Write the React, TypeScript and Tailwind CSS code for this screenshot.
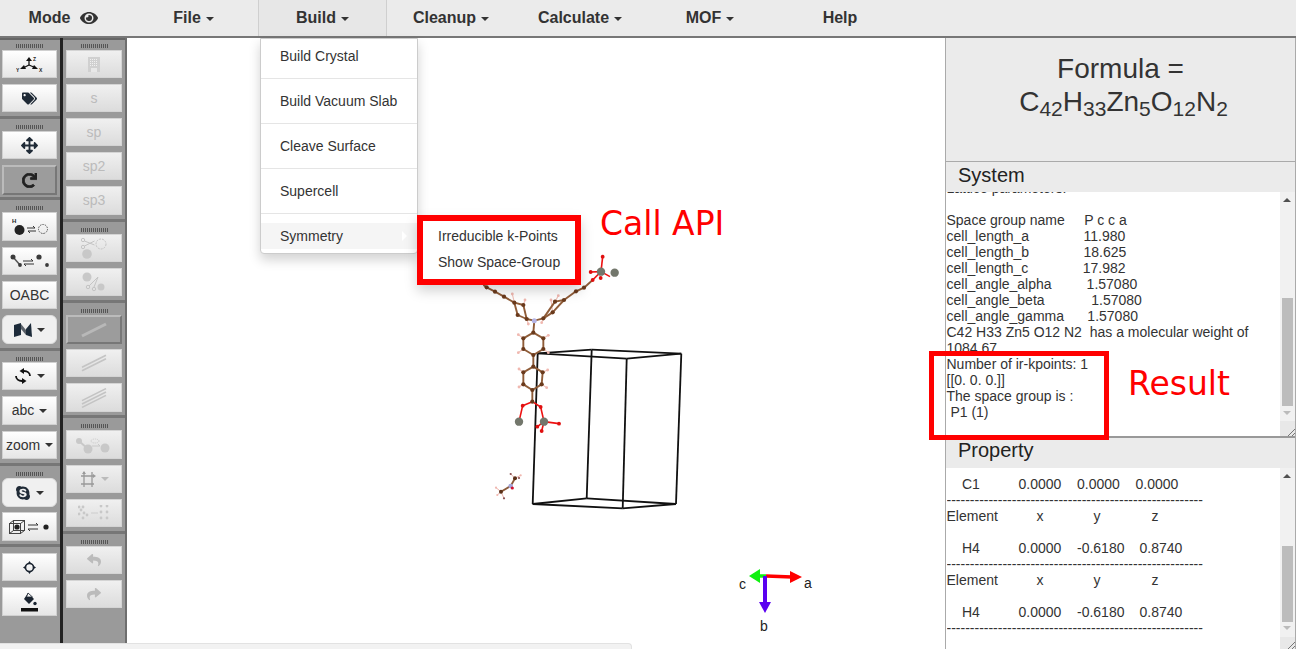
import React from "react";
import { FaEye, FaTags, FaArrowsAlt, FaRedo, FaSkype, FaReply, FaShare } from "react-icons/fa";

const Caret = () => <span className="inline-block ml-[5px] align-middle w-0 h-0 border-x-[4px] border-x-transparent border-t-[4px] border-t-current" />;

const base = "w-full flex items-center justify-center text-[14px] shrink-0";
function Btn({ h = 28, children, on, dis, mt = 6, rounded }: { h?: number; children?: React.ReactNode; on?: boolean; dis?: boolean; mt?: number; rounded?: boolean }) {
  const look = on
    ? "bg-[#9c9c9c] border-2 border-t-[#bbbbbb] border-l-[#bbbbbb] border-r-[#777777] border-b-[#777777] text-[#222]"
    : dis
    ? "bg-gradient-to-b from-[#f0f0f0] to-[#dcdcdc] text-[#bbb] border border-[#d4d4d4]"
    : rounded
    ? "bg-[#f0f0f0] text-[#333] rounded-[6px] border border-[#dddddd]"
    : "bg-gradient-to-b from-[#ffffff] to-[#e6e6e6] text-[#333] border border-[#d0d0d0]";
  return <div style={{ height: h, marginTop: mt }} className={`${base} ${look}`}>{children}</div>;
}
const Handle = ({ first }: { first?: boolean }) => (
  <div className={`h-[4px] w-[27px] mx-auto shrink-0 opacity-80 bg-[repeating-linear-gradient(90deg,#444_0_1px,transparent_1px_2px)] ${first ? "mt-[4px]" : "mt-[6px]"}`} />
);
function Group({ children, last, pb = 4, wide }: { children: React.ReactNode; last?: boolean; pb?: number; wide?: boolean }) {
  const pad = pb === 2 ? "pb-[2px]" : pb === 3 ? "pb-[3px]" : "pb-[4px]";
  return <div className={`flex flex-col pr-[3px] ${wide ? "pl-[3px]" : "pl-[2px]"} ${pad} ${last ? "" : "border-b-[3px] border-[#777]"}`}>{children}</div>;
}

const Atom = ({ x, y, r = 2, c = "#5a3018" }: { x: number; y: number; r?: number; c?: string }) => <circle cx={x} cy={y} r={r} fill={c} />;

const P = (zx: number, zy: number): [number, number] => [470 + zx / 3, 250 + zy / 3];

type L = [number, number, number, number];
const ccBonds: L[] = [
  [190, 248, 220, 265],[220, 265, 220, 297],[220, 297, 190, 315],[190, 315, 160, 297],[160, 297, 160, 265],[160, 265, 190, 248],
  [193, 212, 190, 248],[190, 315, 190, 350],
  [190, 350, 218, 367],[218, 367, 215, 403],[215, 403, 187, 420],[187, 420, 160, 403],[160, 403, 160, 367],[160, 367, 190, 350],[187, 420, 187, 455],
  [193, 212, 170, 207],[170, 207, 160, 165],[160, 165, 133, 158],[133, 158, 143, 195],[143, 195, 170, 207],[133, 158, 102, 140],[102, 140, 75, 125],[75, 125, 50, 112],[50, 112, 40, 105],
  [193, 212, 220, 205],[220, 205, 255, 155],[255, 155, 282, 150],[282, 150, 248, 187],[248, 187, 220, 205],[282, 150, 318, 124],[318, 124, 342, 113],[342, 113, 368, 90],
];
const oBonds: L[] = [
  [187, 455, 158, 467],[187, 455, 212, 471],[158, 467, 147, 515],[212, 471, 222, 515],[222, 515, 202, 530],[222, 515, 215, 543],[222, 515, 267, 521],
  [393, 65, 398, 20],[393, 65, 362, 66],[393, 65, 368, 90],[393, 65, 420, 80],
];
const hBonds: L[] = [
  [220,265,235,256],[160,265,145,254],[160,297,145,308],[220,297,235,308],[160,367,147,357],[218,367,233,360],[160,403,147,411],[215,403,230,413],[133,158,127,132],[160,165,165,150],[170,207,175,222],[220,205,215,218],[255,155,265,137],[248,187,243,150],
];
const cAtoms = [[190,248],[220,265],[220,297],[190,315],[160,297],[160,265],[190,350],[218,367],[215,403],[187,420],[160,403],[160,367],[187,455],[170,207],[160,165],[133,158],[143,195],[102,140],[75,125],[50,112],[220,205],[255,155],[282,150],[248,187],[318,124],[342,113]];
const oAtoms = [[158,467],[212,471],[202,530],[215,543],[267,521],[398,20],[362,66],[368,90],[392,84]];

function Scene() {
  const tl = [537.7, 353.3], tb = [591.7, 349.7], tr = [681.3, 353.7], tf = [626.7, 358.7];
  const bl = [532.7, 504], bb = [586.7, 498.3], br = [676, 504], bf = [622.7, 508.3];
  const seg = (b: L, i: number) => { const a = P(b[0], b[1]); const c = P(b[2], b[3]); return <line key={i} x1={a[0]} y1={a[1]} x2={c[0]} y2={c[1]} />; };
  return (
    <svg className="absolute left-0 top-0 w-[818px] h-[611px] pointer-events-none" viewBox="127 38 818 611">
      <g stroke="#111" strokeWidth="1.8" fill="none">
        {[[tl,tb],[tb,tr],[tr,tf],[tf,tl],[bl,bb],[bb,br],[br,bf],[bf,bl],[tl,bl],[tb,bb],[tr,br],[tf,bf]].map((e,i)=><line key={i} x1={e[0][0]} y1={e[0][1]} x2={e[1][0]} y2={e[1][1]} />)}
      </g>
      <g stroke="#f0bdb4" strokeWidth="1.1">{hBonds.map(seg)}</g>
      <g stroke="#8f5c38" strokeWidth="1.9">{ccBonds.map(seg)}</g>
      <g stroke="#ee1111" strokeWidth="1.6">{oBonds.map(seg)}</g>
      {hBonds.map((b, i) => { const a = P(b[2], b[3]); return <circle key={i} cx={a[0]} cy={a[1]} r="1.4" fill="#f0b8b0" />; })}
      {cAtoms.map(([x, y], i) => { const a = P(x, y); return <Atom key={i} x={a[0]} y={a[1]} r={2.1} c="#6a3a1c" />; })}
      {oAtoms.map(([x, y], i) => { const a = P(x, y); return <Atom key={i} x={a[0]} y={a[1]} r={1.9} c="#e01010" />; })}
      {[[147,515],[222,515],[393,65],[434,68]].map(([x, y], i) => { const a = P(x, y); return <Atom key={i} x={a[0]} y={a[1]} r={4.2} c="#73776c" />; })}
      <Atom x={534.3} y={320.7} r={2.5} c="#b4b4e4" />
      <g stroke="#8b5a3a" strokeWidth="1.8">
        <line x1="510.7" y1="486" x2="501" y2="491.7" /><line x1="510.7" y1="486" x2="515" y2="478.3" />
      </g>
      <g stroke="#e8a8a0" strokeWidth="0.9">
        <line x1="515" y1="478.3" x2="510.7" y2="474" /><line x1="515" y1="478.3" x2="520.7" y2="475.3" /><line x1="501" y1="491.7" x2="496" y2="487.7" /><line x1="501" y1="491.7" x2="497.3" y2="495" /><line x1="501" y1="491.7" x2="504" y2="498.3" />
      </g>
      <Atom x={501} y={491.7} /><Atom x={515} y={478.3} /><Atom x={510.7} y={486} r={2.3} c="#a4a4d8" /><Atom x={512.3} y={488} r={1.6} c="#d01030" />
      {[[510.7,474,"#8a5050"],[520.7,475.3,"#f0b8b0"],[519,478,"#8a5050"],[496,487.7,"#f0b8b0"],[497.3,495,"#f0b8b0"],[504,498.3,"#8a5050"]].map(([x,y,c],i)=><circle key={i} cx={x as number} cy={y as number} r="1.1" fill={c as string} />)}
      <g fill="none">
        <line x1="766" y1="576" x2="792" y2="577" stroke="#f00" strokeWidth="3.5" /><polygon points="790,571 802,577 790,583" fill="#f00" />
        <line x1="766" y1="576" x2="758" y2="576" stroke="#10f010" strokeWidth="3.5" /><polygon points="749,576 760,569 760,583" fill="#10f010" />
        <line x1="765" y1="576" x2="765" y2="603" stroke="#5a00f0" strokeWidth="4" /><polygon points="759,602 771,602 765,613" fill="#5a00f0" />
      </g>
    </svg>
  );
}

const Axes3 = () => (
  <svg width="27" height="17" viewBox="0 0 27 17">
    <g stroke="#111" strokeWidth="1.3" fill="#111"><line x1="13" y1="9" x2="13" y2="4"/><line x1="13" y1="9" x2="7" y2="12"/><line x1="13" y1="9" x2="20" y2="12"/><polygon points="13,1 10,5 16,5" stroke="none"/><polygon points="4,13 8,9 10,13" stroke="none"/><polygon points="22,13 18,9 16,13" stroke="none"/></g>
    <g fontSize="5" fontWeight="700" fontFamily="Liberation Sans" fill="#222"><text x="17" y="5">Z</text><text x="0" y="16">Y</text><text x="23" y="16">X</text></g>
  </svg>
);
const HSwap = () => (
  <svg width="36" height="20" viewBox="0 0 36 20"><text x="0" y="6" fontSize="6" fontWeight="700" fontFamily="Liberation Sans" fill="#222">H</text><circle cx="7.5" cy="13" r="5" fill="#222"/><path d="M15 11h8M23 11l-2-2M24 14h-8M16 14l2 2" stroke="#333" fill="none"/><circle cx="31" cy="12" r="4.5" fill="none" stroke="#555" strokeDasharray="1.5 1"/></svg>
);
const BondSwap = () => (
  <svg width="40" height="14" viewBox="0 0 40 14"><path d="M3 3l7 8" stroke="#555" strokeWidth="1.5"/><g fill="#3a3a3a"><circle cx="3" cy="3" r="2.5"/><circle cx="10" cy="11" r="1.9"/><circle cx="29" cy="3" r="2.6"/><circle cx="37" cy="11" r="1.9"/></g><path d="M13 7h10l-2-2M24 10H14l2 2" stroke="#333" fill="none"/></svg>
);
const MapIcon = () => (
  <svg width="18" height="14" viewBox="0 0 18 14"><path d="M0 2L7 0v12l-7 2z" fill="#1d2b3a"/><path d="M7 1l5 6v5L7 6z" fill="#5a6068"/><path d="M12 6l5-6 1 14-6-2z" fill="#1d2b3a"/></svg>
);
const CycleIcon = () => (
  <svg width="18" height="16" viewBox="0 0 18 16" fill="none" stroke="#111" strokeWidth="1.8"><path d="M16 8c0-3-2.500-5-6-5"/><path d="M2 8c0 3 2.500 5 6 5"/><polygon points="5.500,3 10,0 10,6" fill="#111" stroke="none"/><polygon points="12.500,13 8,10 8,16" fill="#111" stroke="none"/></svg>
);
const CubeSwap = () => (
  <svg width="41" height="14" viewBox="0 0 41 14"><g fill="none" stroke="#444"><rect x="0.500" y="3.500" width="11" height="10"/><rect x="4.500" y="0.500" width="11" height="10"/><path d="M0.500 3.500l4-3M11.500 3.500l4-3M11.500 13.500l4-3M0.500 13.500l4-3"/></g><circle cx="8" cy="7" r="2.6" fill="#222"/><path d="M19 5h10M29 5l-2-2M29 9H19M19 9l2 2" stroke="#333" fill="none"/><circle cx="37" cy="7" r="2.6" fill="#222"/></svg>
);
const Crosshair = () => (
  <svg width="13" height="13" viewBox="0 0 13 13" fill="#1a2430"><circle cx="6.500" cy="6.500" r="4" fill="none" stroke="#1a2430" strokeWidth="1.6"/><polygon points="6.500,0 4.500,3 8.500,3"/><polygon points="6.500,13 4.500,10 8.500,10"/><polygon points="0,6.500 3,4.500 3,8.500"/><polygon points="13,6.500 10,4.500 10,8.500"/></svg>
);
const Bucket = () => (
  <svg width="17" height="20" viewBox="0 0 17 20"><path d="M7 1l6 6-5 5-5-5z" fill="#1a2430"/><path d="M5.500 5h6L7 1z" fill="#f4f4f4" stroke="#1a2430" strokeWidth="0.800"/><circle cx="14" cy="11.500" r="1.700" fill="#1a2430"/><rect x="0" y="16" width="17" height="3.500" fill="#111"/></svg>
);
const Doc = () => (
  <svg width="12" height="15" viewBox="0 0 12 15"><rect width="12" height="15" fill="#d0d0d0"/><g fill="#f0f0f0">{[2,4,6,8].map(x=>[2,4,6,8].map(y=><rect key={x+"-"+y} x={x} y={y} width="1" height="1"/>))}</g><rect x="3" y="11" width="6" height="4" fill="#e8e8e8"/></svg>
);
const Scissor = () => (
  <g stroke="#c4c4c4" fill="none"><circle cx="2" cy="2" r="1.700"/><circle cx="2" cy="9" r="1.700"/><path d="M3.500 3l10 4M3.500 8l10-5"/></g>
);
const Cut1 = () => (
  <svg width="26" height="21" viewBox="0 0 26 21"><circle cx="6" cy="16" r="4.800" fill="#c8c8c8"/><circle cx="20" cy="6" r="5" fill="none" stroke="#c4c4c4" strokeDasharray="2 1"/><Scissor /></svg>
);
const Cut2 = () => (
  <svg width="26" height="20" viewBox="0 0 26 20"><circle cx="6" cy="5" r="4.500" fill="#c8c8c8"/><circle cx="20" cy="15" r="3.500" fill="#c8c8c8"/><g stroke="#c4c4c4" fill="none"><circle cx="7" cy="15" r="1.700"/><circle cx="13" cy="17" r="1.700"/><path d="M8 14l9-9M13 15l4-10"/></g></svg>
);
const Lines = ({ n, light }: { n: number; light?: boolean }) => (
  <svg width="26" height="20" viewBox="0 0 26 20" stroke={light ? "#b8b8b8" : "#c4c4c4"} strokeWidth={light ? 3 : 1.6}>{Array.from({ length: n }).map((_, i) => <line key={i} x1="1" y1={16 + i * 3.4 - (n - 1) * 1.7} x2="25" y2={4 + i * 3.4 - (n - 1) * 1.7} />)}</svg>
);
const Merge = () => (
  <svg width="38" height="20" viewBox="0 0 38 20"><circle cx="4" cy="6" r="3" fill="#c8c8c8"/><circle cx="13" cy="14" r="4.500" fill="#c8c8c8"/><path d="M4 6l9 8" stroke="#c8c8c8" strokeWidth="2"/><circle cx="30" cy="13" r="4.500" fill="#c8c8c8"/><ellipse cx="20" cy="6" rx="4" ry="2" fill="none" stroke="#c8c8c8" strokeDasharray="1 1"/><path d="M17 11h8M25 11l-2-2" stroke="#c8c8c8" fill="none"/></svg>
);
const Crop = () => (
  <svg width="16" height="17" viewBox="0 0 16 17" stroke="#999" fill="#999" strokeWidth="1.300"><path d="M1 5h13M1 13h13M4 1v15M12 1v15" fill="none"/><polygon points="16,5 13,3 13,7" stroke="none"/><polygon points="4,0 2,3 6,3" stroke="none"/></svg>
);
const Dots = () => (
  <svg width="32" height="16" viewBox="0 0 32 16" fill="#c8c8c8">{[[1,2],[5,2],[3,5],[1,9],[6,8],[9,10],[5,13],[23,1],[29,1],[23,7],[29,7],[23,13],[29,13]].map(([x,y],i)=><circle key={i} cx={x} cy={y} r="1.400"/>)}<path d="M13 8h7" stroke="#ccc"/></svg>
);

const menuItems = ["Build Vacuum Slab", "Cleave Surface", "Supercell"];
const sysText = `Lattice parameters:

Space group name     P c c a
cell_length_a              11.980
cell_length_b              18.625
cell_length_c              17.982
cell_angle_alpha         1.57080
cell_angle_beta            1.57080
cell_angle_gamma      1.57080`;
const sysText2 = `Number of ir-kpoints: 1
[[0. 0. 0.]]
The space group is :
 P1 (1)`;
const dash = "-".repeat(55);
const Head = () => (
  <div className="flex h-[16px]">
    <span className="w-[72px]">Element</span>
    <span className="w-[58.5px] pl-[18px]">x</span>
    <span className="w-[58.500px] pl-[16.5px]">y</span>
    <span className="w-[58px] pl-[16px]">z</span>
  </div>
);
const Vals = ({ a, c, d, shift }: { a: string; c: string; d: string; shift?: boolean }) => (
  <div className="flex h-[16px]">
    <span className="w-[72px] pl-[15.5px]">{a}</span>
    <span className="w-[58.5px]">0.0000</span>
    <span className="w-[58.500px]">{c}</span>
    <span className={`w-[58px] ${shift ? "pl-[4px]" : ""}`}>{d}</span>
  </div>
);
const Dash = () => <div className="h-[16px] leading-[16px] overflow-hidden">{dash}</div>;

function Scroll({ tall }: { tall?: boolean }) {
  return (
    <div className="w-[15px] shrink-0 bg-[#f1f1f1] relative">
      <div className="absolute left-[3px] top-[6px] w-0 h-0 border-x-[4px] border-x-transparent border-b-[4px] border-b-[#505050]" />
      <div className={`absolute left-[2px] w-[11px] bg-[#bcbcbc] ${tall ? "top-[106px] h-[108px]" : "top-[78px] h-[76px]"}`} />
      <div className={`absolute left-[3px] w-0 h-0 border-x-[4px] border-x-transparent border-t-[4px] border-t-[#bbbbbb] ${tall ? "bottom-[21px]" : "bottom-[19px]"}`} />
      <div className={`absolute left-0 bottom-0 w-[15px] bg-[#e8e8e8] overflow-hidden ${tall ? "h-[15px]" : "h-[12px]"}`}>
        <svg className="absolute right-0 bottom-0" width="10" height="10" viewBox="0 0 10 10" stroke="#777"><path d="M3 10l7-7M7 10l3-3" /></svg>
      </div>
    </div>
  );
}

const Sub = ({ children }: { children: React.ReactNode }) => <sub className="text-[21px] leading-none">{children}</sub>;

export default function App() {
  return (
    <div className="w-[1296px] h-[649px] relative overflow-hidden bg-white text-[#333] font-['Liberation_Sans',Arial,sans-serif] flex flex-col">
      <nav className="h-[38px] shrink-0 bg-[#ebebeb] border-b-2 border-[#777] flex text-[16px] font-bold leading-[36px] text-center">
        <div className="w-[129px] pr-[2px] flex justify-center items-center gap-[10px]"><span>Mode</span><FaEye size={18} /></div>
        <div className="w-[129px]">File<Caret /></div>
        <div className="w-[129px] bg-[#e7e7e7] border-l border-r border-[#cfcfcf]">Build<Caret /></div>
        <div className="w-[130px] pr-[2px]">Cleanup<Caret /></div>
        <div className="w-[129px] pr-[3px]">Calculate<Caret /></div>
        <div className="w-[130px] pr-[2px]">MOF<Caret /></div>
        <div className="w-[130px] pr-[2px]">Help</div>
      </nav>
      <div className="flex-1 flex min-h-0">
        <div className="w-[127px] shrink-0 bg-[#9a9a9a] flex border-r-2 border-[#6e6e6e] text-[#333]">
          <div className="w-[60px] flex flex-col border-t-2 border-[#666]">
            <Group><Handle first /><Btn mt={2}><Axes3 /></Btn><Btn><FaTags size={15} color="#1f2a36" /></Btn></Group>
            <Group pb={2}><Handle /><Btn mt={2}><FaArrowsAlt size={17} color="#1f2a36" /></Btn><Btn on h={30}><FaRedo size={15} stroke="currentColor" strokeWidth={28} /></Btn></Group>
            <Group><Handle /><Btn mt={2} h={29}><HSwap /></Btn><Btn><BondSwap /></Btn><Btn>OABC</Btn><Btn h={29} rounded><MapIcon /><Caret /></Btn></Group>
            <Group><Handle /><Btn mt={1}><CycleIcon /><Caret /></Btn><Btn h={29}>abc<Caret /></Btn><Btn>zoom<Caret /></Btn></Group>
            <Group pb={3}><Handle /><Btn mt={2} h={29} rounded><FaSkype size={16} color="#1f2a36" /><Caret /></Btn><Btn mt={5} h={29}><CubeSwap /></Btn></Group>
            <Group last><Btn><Crosshair /></Btn><Btn h={29}><Bucket /></Btn></Group>
          </div>
          <div className="w-[3px] bg-[#222]" />
          <div className="flex-1 flex flex-col border-t-2 border-[#666]">
            <Group wide><Handle first /><Btn mt={2} dis><Doc /></Btn><Btn dis>s</Btn><Btn dis>sp</Btn><Btn dis>sp2</Btn><Btn dis h={29}>sp3</Btn></Group>
            <Group wide><Handle /><Btn mt={2} dis><Cut1 /></Btn><Btn dis><Cut2 /></Btn></Group>
            <Group wide pb={3}><Handle /><Btn mt={2} on h={29}><Lines n={1} light /></Btn><Btn mt={5} dis><Lines n={2} /></Btn><Btn dis h={29}><Lines n={3} /></Btn></Group>
            <Group wide><Handle /><Btn mt={2} dis h={29}><Merge /></Btn><Btn dis><Crop /><Caret /></Btn><Btn dis><Dots /></Btn></Group>
            <Group wide last><Handle /><Btn mt={2} dis><FaReply size={14} /></Btn><Btn dis><FaShare size={14} /></Btn></Group>
          </div>
        </div>
        <main className="flex-1 relative">
          <Scene />
        </main>
        <aside className="w-[351px] shrink-0 bg-[#ebebeb] border-x border-[#aaa] flex flex-col">
          <div className="h-[123px] shrink-0 text-center text-[28px] leading-[33px] pt-[14px] text-[#333]">
            <div>Formula =</div>
            <div className="pl-[6px]">C<Sub>42</Sub>H<Sub>33</Sub>Zn<Sub>5</Sub>O<Sub>12</Sub>N<Sub>2</Sub></div>
          </div>
          <div className="h-[31px] shrink-0 border-t border-[#aaa] pl-[12px] text-[20px] leading-[26px] text-[#222]">System</div>
          <div className="h-[246px] shrink-0 bg-white flex border-b-2 border-[#999] overflow-hidden text-[14px] leading-[16px]">
            <div className="flex-1 overflow-hidden whitespace-pre pl-[0.5px]">
              <div className="-mt-[12px]">{sysText}</div>
              <div className="whitespace-normal">C42 H33 Zn5 O12 N2&nbsp; has a molecular weight of 1084.67</div>
              <div>{sysText2}</div>
            </div>
            <Scroll tall />
          </div>
          <div className="h-[30px] shrink-0 pl-[12px] text-[20px] leading-[24px] text-[#222]">Property</div>
          <div className="flex-1 bg-white flex overflow-hidden text-[14px] leading-[16px]">
            <div className="flex-1 pt-[8px] pl-[0.5px] overflow-hidden">
              <Vals a="C1" c="0.0000" d="0.0000" />
              <Dash />
              <Head />
              <div className="h-[16px]" />
              <Vals a="H4" c="-0.6180" d="0.8740" shift />
              <Dash />
              <Head />
              <div className="h-[16px]" />
              <Vals a="H4" c="-0.6180" d="0.8740" shift />
              <Dash />
            </div>
            <Scroll />
          </div>
        </aside>
      </div>

      <div className="absolute left-0 bottom-0 w-[632px] h-[6px] bg-[#f2f2f2] rounded-tr-[4px] border-t border-r border-[#e2e2e2]" />

      <div className="absolute left-[260px] top-[38px] w-[158px] h-[216px] bg-white rounded-b-[4px] border border-[#ccc] shadow-[0_6px_12px_rgba(0,0,0,0.175)] text-[14px] text-[#333]">
        <div className="h-[40px] pl-[19px] leading-[34px] border-b border-[#e5e5e5]">Build Crystal</div>
        {menuItems.map((m) => (
          <div key={m} className="h-[45px] pl-[19px] leading-[44px] border-b border-[#e5e5e5]">{m}</div>
        ))}
        <div className="mt-[9px] h-[26px] pl-[19px] leading-[26px] bg-[#f5f5f5] relative">Symmetry
          <span className="absolute right-[10px] top-[8px] w-0 h-0 border-y-[5px] border-y-transparent border-l-[5px] border-l-white" />
        </div>
      </div>
      <div className="absolute left-[417px] top-[215px] w-[164px] h-[70px] bg-white border-[6px] border-[#ff0000] text-[14px] text-[#333] pl-[15px] pt-[2px] leading-[26px] shadow-[0_6px_12px_rgba(0,0,0,0.175)]">
        <div>Irreducible k-Points</div>
        <div>Show Space-Group</div>
      </div>
      <div className="absolute left-[600px] top-[205px] text-[33px] leading-[38px] text-[#ff0000] font-['DejaVu_Sans',sans-serif]">Call API</div>
      <div className="absolute left-[929px] top-[351px] w-[180px] h-[89px] border-[5px] border-[#ff0000]" />
      <div className="absolute left-[1128px] top-[365px] text-[33px] leading-[38px] text-[#ff0000] font-['DejaVu_Sans',sans-serif]">Result</div>
      <div className="absolute left-[739px] top-[576px] text-[14px] leading-[16px] text-[#222]">c</div>
      <div className="absolute left-[804px] top-[575px] text-[14px] leading-[16px] text-[#222]">a</div>
      <div className="absolute left-[760px] top-[618px] text-[14px] leading-[16px] text-[#222]">b</div>
    </div>
  );
}
